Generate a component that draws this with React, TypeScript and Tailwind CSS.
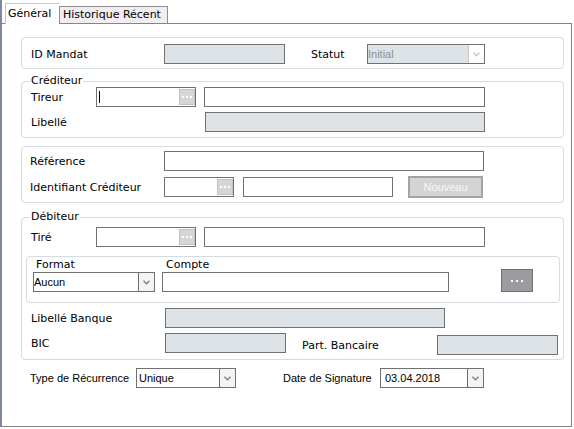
import type { ReactNode } from "react";
import clsx from "clsx";

function Chevron({ light }: { light?: boolean }) {
  return (
    <svg width="7" height="5" viewBox="0 0 7 5">
      <path
        d="M0.5 0.8 L3.5 3.8 L6.5 0.8"
        fill="none"
        stroke={light ? "#c4c4c4" : "#7c7c7c"}
        strokeWidth="1.3"
      />
    </svg>
  );
}

function Dots({ big }: { big?: boolean }) {
  return (
    <div className={clsx("flex", big ? "gap-[3px]" : "gap-[2px]")}>
      <span className="w-[2px] h-[2px] bg-white" />
      <span className="w-[2px] h-[2px] bg-white" />
      <span className="w-[2px] h-[2px] bg-white" />
    </div>
  );
}

function Field({
  className,
  gray,
  children,
}: {
  className: string;
  gray?: boolean;
  children?: ReactNode;
}) {
  return (
    <div
      className={clsx(
        "h-[20px] shrink-0 border border-[#717171] flex items-center",
        gray ? "bg-[#dee3e7]" : "bg-white",
        className,
      )}
    >
      {children}
    </div>
  );
}

function LookupField({ className, caret }: { className: string; caret?: boolean }) {
  return (
    <Field className={clsx(className, "justify-between")}>
      {caret ? <span className="ml-[2px] w-px h-[12px] bg-black" /> : <span />}
      <div className="w-[16px] h-[16px] bg-[#d6d6d6] border border-[#c2c2c2] flex items-center justify-center">
        <Dots />
      </div>
    </Field>
  );
}

function Select({
  className,
  value,
  disabled,
  pad,
}: {
  className: string;
  value: string;
  disabled?: boolean;
  pad: string;
}) {
  return (
    <Field gray={disabled} className={clsx(className, "items-stretch")}>
      <span
        className={clsx(
          "flex-1 flex items-center font-['Liberation_Sans',Arial,sans-serif] text-[11px]",
          disabled ? "text-[#8f8f8f]" : "text-black",
          pad,
        )}
      >
        {value}
      </span>
      <span
        className={clsx(
          "w-[16px] flex items-center justify-center border-l",
          disabled ? "bg-white border-[#c8c8c8]" : "bg-[#f4f4f4] border-[#6f6f6f]",
        )}
      >
        <Chevron light={disabled} />
      </span>
    </Field>
  );
}

function Legend({ children }: { children: ReactNode }) {
  return (
    <div className="-mt-[7px] ml-[8px] px-px w-fit h-[12px] leading-[12px] bg-white">
      {children}
    </div>
  );
}

export default function App() {
  return (
    <div className="w-[574px] h-[429px] bg-white overflow-hidden font-['DejaVu_Sans',Verdana,sans-serif] text-[11px] leading-[13px] text-black">
      <div className="w-[572px] h-[427px] border-l-2 border-[#7f889a] flex flex-col">
        <div className="h-[23px] shrink-0 flex items-end pl-[3px]">
          <div className="relative z-10 -mb-px h-[21px] w-[54px] bg-white border-l border-t border-[#c8c8c8] pl-[2px] pt-[3px]">
            Général
          </div>
          <div className="h-[17px] w-[109px] bg-[#f1edf1] border border-b-0 border-[#8e8e8e] pl-[3px] pt-px">
            Historique Récent
          </div>
        </div>

        <div className="flex-1 border-t border-r border-b border-[#858585] pl-[19px]">
          {/* ID / statut */}
          <div className="mt-[13px] w-[543px] h-[32px] border border-[#d3dbe3] rounded-[4px] pl-[9px] pt-[6px]">
            <div className="flex items-center h-[20px]">
              <span className="w-[133px]">ID Mandat</span>
              <Field gray className="w-[121px]" />
              <span className="ml-[26px] w-[56px]">Statut</span>
              <Select className="w-[118px]" value="Initial" disabled pad="pl-0" />
            </div>
          </div>

          {/* Créditeur */}
          <div className="mt-[12px] w-[543px] h-[57px] border border-[#d3dbe3] rounded-[4px]">
            <Legend>Créditeur</Legend>
            <div className="flex items-center h-[20px] pl-[9px]">
              <span className="w-[65px]">Tireur</span>
              <LookupField className="w-[100px]" caret />
              <Field className="ml-[8px] w-[281px]" />
            </div>
            <div className="mt-[5px] flex items-center h-[20px] pl-[9px]">
              <span className="w-[174px]">Libellé</span>
              <Field gray className="w-[280px]" />
            </div>
          </div>

          {/* Référence */}
          <div className="mt-[8px] w-[543px] h-[57px] border border-[#d3dbe3] rounded-[4px] pl-[8px]">
            <div className="mt-[4px] flex items-center h-[20px]">
              <span className="w-[134px]">Référence</span>
              <Field className="w-[320px]" />
            </div>
            <div className="mt-[5px] flex items-center h-[22px]">
              <span className="w-[134px]">Identifiant Créditeur</span>
              <LookupField className="w-[70px]" />
              <Field className="ml-[9px] w-[150px]" />
              <div className="ml-[15px] w-[75px] h-[22px] bg-[#d4d4d4] border-2 border-[#a3a3a3] flex items-center justify-center font-['Liberation_Sans',Arial,sans-serif] text-[11px] text-[#f7f7f7]">
                Nouveau
              </div>
            </div>
          </div>

          {/* Débiteur */}
          <div className="mt-[14px] w-[543px] h-[143px] border border-[#d3dbe3] rounded-[4px]">
            <Legend>Débiteur</Legend>
            <div className="mt-[4px] flex items-center h-[20px] pl-[9px]">
              <span className="w-[65px]">Tiré</span>
              <LookupField className="w-[100px]" />
              <Field className="ml-[8px] w-[281px]" />
            </div>

            <div className="mt-[9px] ml-[4px] w-[534px] h-[47px] border border-[#d3dbe3] rounded-[4px]">
              <div className="mt-px flex h-[13px] pl-[9px]">
                <span className="w-[130px]">Format</span>
                <span>Compte</span>
              </div>
              <div className="mt-px flex items-end h-[20px] pl-[6px]">
                <Select className="w-[122px]" value="Aucun" pad="pl-0" />
                <Field className="ml-[7px] w-[287px]" />
                <div className="ml-[52px] shrink-0 w-[32px] h-[23px] bg-[#9c9b9f] border border-[#717171] flex items-center justify-center">
                  <Dots big />
                </div>
              </div>
            </div>

            <div className="mt-[5px] flex items-center h-[20px] pl-[9px]">
              <span className="w-[134px]">Libellé Banque</span>
              <Field gray className="w-[280px]" />
            </div>
            <div className="mt-[5px] flex items-start pl-[9px]">
              <div className="flex items-center h-[20px]">
                <span className="w-[134px]">BIC</span>
                <Field gray className="w-[121px]" />
              </div>
              <div className="mt-[2px] ml-[16px] flex items-center h-[20px]">
                <span className="w-[135px]">Part. Bancaire</span>
                <Field gray className="w-[121px]" />
              </div>
            </div>
          </div>

          {/* Récurrence / signature */}
          <div className="mt-[8px] flex items-center h-[20px] pl-[9px] font-['Liberation_Sans',Arial,sans-serif] text-[11px]">
            <span className="w-[106px]">Type de Récurrence</span>
            <Select className="w-[100px]" value="Unique" pad="pl-[2px]" />
            <span className="ml-[47px] w-[97px]">Date de Signature</span>
            <Select className="w-[104px]" value="03.04.2018" pad="pl-[4px]" />
          </div>
        </div>
      </div>
    </div>
  );
}
